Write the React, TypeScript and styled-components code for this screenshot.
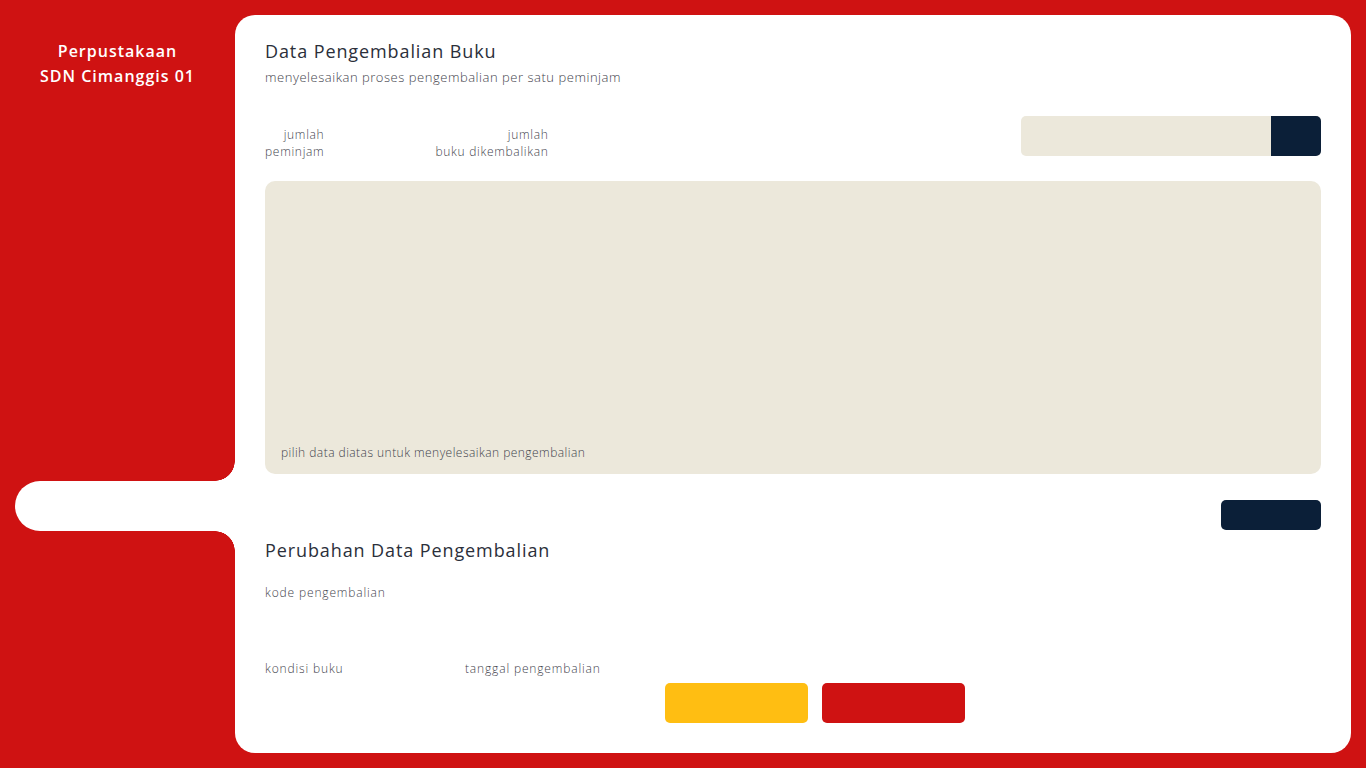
import React from "react";
import styled, { createGlobalStyle } from "styled-components";

const RED = "#CF1212";
const BEIGE = "#ECE8DB";
const NAVY = "#0B1F38";
const YELLOW = "#FFBE12";
const MUTED = "#3f434c";
const FONT = `"Open Sans", "DejaVu Sans", sans-serif`;

const Global = createGlobalStyle`
  html, body { margin: 0; padding: 0; }
  body { background: ${RED}; font-family: ${FONT}; }
  * { box-sizing: border-box; }
`;

const Page = styled.div`
  display: flex;
  min-height: 768px;
  background: ${RED};
`;

const Sidebar = styled.aside`
  width: 235px;
  flex-shrink: 0;
  display: flex;
  flex-direction: column;
  padding-top: 39px;
`;

const Brand = styled.div`
  color: #fff;
  font-weight: 600;
  font-size: 16px;
  line-height: 25px;
  letter-spacing: 1px;
  text-align: center;
`;

const Nav = styled.nav`
  margin-top: 392px;
  display: flex;
  flex-direction: column;
`;

const NavItem = styled.div<{ $active?: boolean }>`
  position: relative;
  height: 50px;
  margin-left: 15px;
  border-radius: 25px 0 0 25px;
  background: ${(p) => (p.$active ? "#fff" : "transparent")};

  &::before,
  &::after {
    content: "";
    display: ${(p) => (p.$active ? "block" : "none")};
    position: absolute;
    right: 0;
    width: 20px;
    height: 20px;
  }
  &::before {
    top: -20px;
    background: radial-gradient(circle at 0 0, transparent 19.5px, #fff 20px);
  }
  &::after {
    bottom: -20px;
    background: radial-gradient(circle at 0 100%, transparent 19.5px, #fff 20px);
  }
`;

const Main = styled.main`
  flex: 1;
  margin: 15px 15px 15px 0;
  background: #fff;
  border-radius: 20px;
  padding: 23px 30px 30px;
  display: flex;
  flex-direction: column;
  color: #2B2F3A;
`;

const Title = styled.h1`
  margin: 0;
  font-size: 18px;
  line-height: 26px;
  font-weight: 500;
  letter-spacing: 0.9px;
  color: #2B2F3A;
`;

const Subtitle = styled.p`
  margin: 3px 0 0;
  font-size: 13px;
  line-height: 20px;
  font-weight: 300;
  letter-spacing: 0.53px;
  color: ${MUTED};
`;

const StatsRow = styled.div`
  margin-top: 29px;
  height: 40px;
  display: flex;
  justify-content: space-between;
  align-items: flex-start;
`;

const Stats = styled.div`
  display: flex;
  gap: 111px;
  padding-top: 10px;
`;

const StatLabel = styled.div`
  text-align: right;
  font-size: 12px;
  line-height: 17px;
  font-weight: 300;
  letter-spacing: 0.7px;
  color: ${MUTED};
`;

const Search = styled.div`
  width: 300px;
  height: 40px;
  display: flex;
  border-radius: 5px;
  overflow: hidden;
  background: ${BEIGE};
`;

const SearchInput = styled.input`
  flex: 1;
  border: none;
  outline: none;
  background: transparent;
  padding: 0 12px;
  font-family: ${FONT};
`;

const SearchButton = styled.button`
  width: 50px;
  border: none;
  background: ${NAVY};
  padding: 0;
`;

const DataBox = styled.div`
  margin-top: 25px;
  height: 293px;
  background: ${BEIGE};
  border-radius: 10px;
  padding: 0 16px 12px;
  display: flex;
  align-items: flex-end;
`;

const Hint = styled.span`
  font-size: 12px;
  line-height: 18px;
  font-weight: 300;
  letter-spacing: 0.46px;
  color: ${MUTED};
`;

const SubmitRow = styled.div`
  margin-top: 26px;
  display: flex;
  justify-content: flex-end;
`;

const NavyButton = styled.button`
  width: 100px;
  height: 30px;
  border: none;
  border-radius: 5px;
  background: ${NAVY};
`;

const SectionTitle = styled(Title)`
  margin-top: 7px;
`;

const FieldLabel = styled.label`
  display: block;
  font-size: 12px;
  line-height: 18px;
  font-weight: 300;
  letter-spacing: 0.85px;
  color: ${MUTED};
`;

const CodeField = styled.div`
  margin-top: 21px;
  height: 77px;
`;

const FormGrid = styled.div`
  display: grid;
  grid-template-columns: 200px 200px auto;
  align-items: end;
  margin-top: -1px;
`;

const Field = styled.div`
  height: 63px;
`;

const Actions = styled.div`
  display: flex;
  gap: 14px;
`;

const ActionButton = styled.button<{ $color: string }>`
  width: 143px;
  height: 40px;
  border: none;
  border-radius: 5px;
  background: ${(p) => p.$color};
`;

export default function App() {
  return (
    <>
      <Global />
      <Page>
        <Sidebar>
          <Brand>
            Perpustakaan
            <br />
            SDN Cimanggis 01
          </Brand>
          <Nav>
            <NavItem $active />
          </Nav>
        </Sidebar>
        <Main>
          <Title>Data Pengembalian Buku</Title>
          <Subtitle>menyelesaikan proses pengembalian per satu peminjam</Subtitle>
          <StatsRow>
            <Stats>
              <StatLabel>
                jumlah
                <br />
                peminjam
              </StatLabel>
              <StatLabel>
                jumlah
                <br />
                buku dikembalikan
              </StatLabel>
            </Stats>
            <Search>
              <SearchInput aria-label="cari" />
              <SearchButton aria-label="cari" />
            </Search>
          </StatsRow>
          <DataBox>
            <Hint>pilih data diatas untuk menyelesaikan pengembalian</Hint>
          </DataBox>
          <SubmitRow>
            <NavyButton aria-label="selesai" />
          </SubmitRow>
          <SectionTitle>Perubahan Data Pengembalian</SectionTitle>
          <CodeField>
            <FieldLabel>kode pengembalian</FieldLabel>
          </CodeField>
          <FormGrid>
            <Field>
              <FieldLabel>kondisi buku</FieldLabel>
            </Field>
            <Field>
              <FieldLabel>tanggal pengembalian</FieldLabel>
            </Field>
            <Actions>
              <ActionButton $color={YELLOW} aria-label="ubah" />
              <ActionButton $color={RED} aria-label="hapus" />
            </Actions>
          </FormGrid>
        </Main>
      </Page>
    </>
  );
}
